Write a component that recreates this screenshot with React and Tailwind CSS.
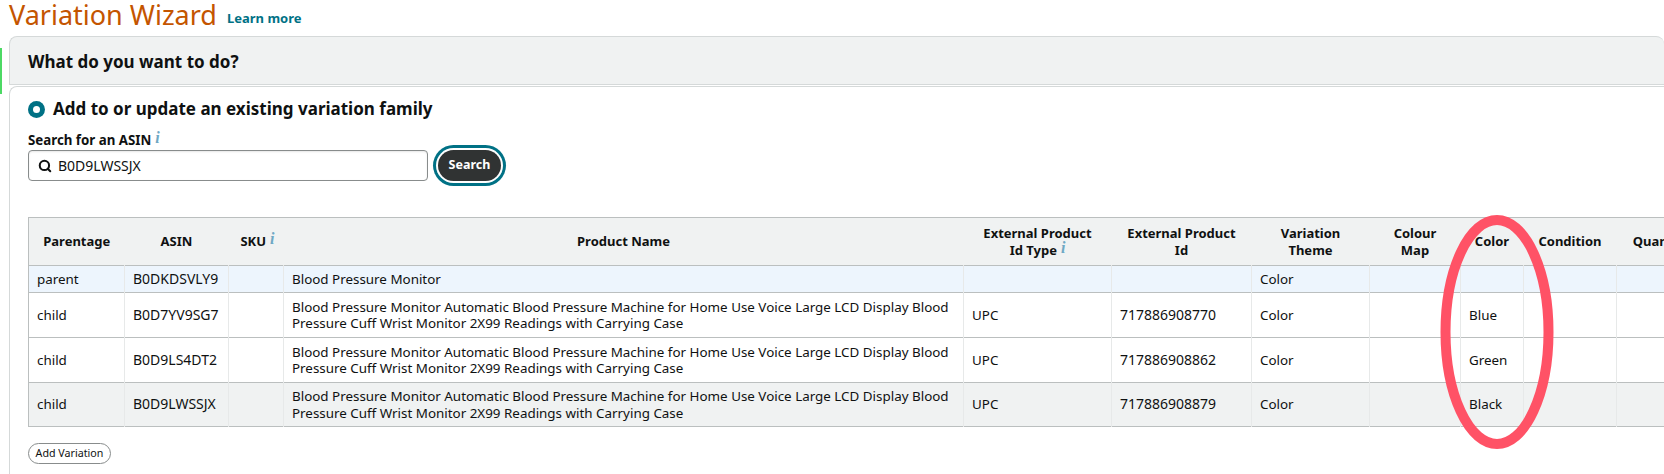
import React from 'react';
import { Search } from 'lucide-react';

const PRODUCT_NAME =
  'Blood Pressure Monitor Automatic Blood Pressure Machine for Home Use Voice Large LCD Display Blood Pressure Cuff Wrist Monitor 2X99 Readings with Carrying Case';

const rows = [
  { parentage: 'parent', asin: 'B0DKDSVLY9', name: 'Blood Pressure Monitor', type: '', ext: '', color: '', bg: 'bg-[#edf5fd]', height: 'h-[27px]' },
  { parentage: 'child', asin: 'B0D7YV9SG7', name: PRODUCT_NAME, type: 'UPC', ext: '717886908770', color: 'Blue', bg: 'bg-white', height: 'h-[45px]' },
  { parentage: 'child', asin: 'B0D9LS4DT2', name: PRODUCT_NAME, type: 'UPC', ext: '717886908862', color: 'Green', bg: 'bg-white', height: 'h-[45px]' },
  { parentage: 'child', asin: 'B0D9LWSSJX', name: PRODUCT_NAME, type: 'UPC', ext: '717886908879', color: 'Black', bg: 'bg-[#f0f2f2]', height: 'h-[44px]' },
];

const InfoMark = () => (
  <i className="ml-1 font-['Liberation_Serif',serif] text-[16px] font-bold leading-none text-[#6fa8c4] relative -top-[2px]">i</i>
);

const Th = ({ children, className = '' }) => (
  <th className={`px-1 text-center align-middle text-[13px] font-bold leading-[17px] text-[#0f1111] ${className}`}>{children}</th>
);

const Td = ({ children, wide }) => (
  <td className={`border-r border-[#e7e9e9] pl-2 pr-1 align-middle leading-[16.5px] text-[#0f1111] ${wide ? 'text-[14px]' : 'text-[13.4px]'}`}>
    {children}
  </td>
);

const App = () => {
  return (
    <div className="relative h-[474px] w-[1664px] overflow-hidden bg-white font-['Noto_Sans',sans-serif] text-[#0f1111]">
      <div className="flex h-[36px] items-start pl-[9px]">
        <h1 className="text-[27px] font-normal leading-[30px] text-[#c45500]">Variation Wizard</h1>
        <a className="ml-[10px] mt-[9px] text-[13px] font-bold leading-[18px] text-[#007185]">Learn more</a>
      </div>

      {/* green sliver of the neighbouring page element */}
      <div className="absolute left-0 top-[48px] h-[46px] w-[2px] bg-[#4cd964]" />

      <div className="ml-[9px]">
        <div className="flex h-[49px] items-center rounded-t-lg border border-r-0 border-[#d5d9d9] bg-[#f0f2f2] pl-[18px] pt-[2px]">
          <h2 className="text-[17px] font-bold text-[#0f1111]">What do you want to do?</h2>
        </div>

        <div className="mt-[1px] h-[388px] rounded-tl-lg border-l border-t border-[#d5d9d9] pl-[18px]">
          <label className="mt-[11px] flex items-center">
            <span className="flex h-[17px] w-[17px] items-center justify-center rounded-full bg-[#007185]">
              <span className="h-[7px] w-[7px] rounded-full bg-white" />
            </span>
            <span className="ml-2 text-[17px] font-bold leading-[22px]">Add to or update an existing variation family</span>
          </label>

          <div className="mt-[11px] text-[13.3px] font-bold leading-[18px]">
            Search for an ASIN
            <InfoMark />
          </div>

          <div className="mt-[1px] flex items-center">
            <div className="flex h-[31px] w-[400px] items-center rounded border border-[#888c8c] pl-[9px] shadow-[inset_0_1px_2px_rgba(15,17,17,0.1)]">
              <Search size={14} strokeWidth={3.5} className="text-[#0f1111]" />
              <span className="ml-[6px] text-[14px] text-[#0f1111]">B0D9LWSSJX</span>
            </div>
            <button className="ml-[10px] flex h-[31px] w-[63px] items-center justify-center rounded-full bg-[#303333] text-[12.5px] font-bold text-white shadow-[0_0_0_2px_#fff,0_0_0_5px_#007185]">
              Search
            </button>
          </div>

          <div className="mt-[36px]">
            <table className="w-[1678px] table-fixed border-collapse border border-r-0 border-[#bbbfbf]">
              <colgroup>
                <col className="w-[96px]" />
                <col className="w-[104px]" />
                <col className="w-[55px]" />
                <col className="w-[680px]" />
                <col className="w-[148px]" />
                <col className="w-[140px]" />
                <col className="w-[118px]" />
                <col className="w-[91px]" />
                <col className="w-[63px]" />
                <col className="w-[93px]" />
                <col className="w-[90px]" />
              </colgroup>
              <thead>
                <tr className="h-[48px] border-b border-[#bbbfbf] bg-[#f0f2f2]">
                  <Th>Parentage</Th>
                  <Th>ASIN</Th>
                  <Th className="pl-[7px]">
                    SKU
                    <InfoMark />
                  </Th>
                  <Th>Product Name</Th>
                  <Th>
                    External Product
                    <br />
                    Id Type
                    <InfoMark />
                  </Th>
                  <Th>
                    External Product
                    <br />
                    Id
                  </Th>
                  <Th>
                    Variation
                    <br />
                    Theme
                  </Th>
                  <Th>
                    Colour
                    <br />
                    Map
                  </Th>
                  <Th>Color</Th>
                  <Th>Condition</Th>
                  <Th>Quantity</Th>
                </tr>
              </thead>
              <tbody>
                {rows.map((row) => (
                  <tr key={row.asin} className={`${row.height} ${row.bg} border-b border-[#bbbfbf]`}>
                    <Td>{row.parentage}</Td>
                    <Td wide>{row.asin}</Td>
                    <Td />
                    <Td>{row.name}</Td>
                    <Td>{row.type}</Td>
                    <Td wide>{row.ext}</Td>
                    <Td>Color</Td>
                    <Td />
                    <Td>{row.color}</Td>
                    <Td />
                    <Td />
                  </tr>
                ))}
              </tbody>
            </table>
          </div>

          <button className="mt-[16px] flex h-[21px] w-[83px] items-center justify-center rounded-full border border-[#888c8c] bg-white text-[10.7px] text-[#0f1111]">
            Add Variation
          </button>
        </div>
      </div>

      {/* red hand-drawn marker round the Color column */}
      <svg className="pointer-events-none absolute left-[1440px] top-[215px]" width="114" height="234" viewBox="0 0 114 234">
        <ellipse cx="57" cy="117" rx="51.5" ry="112" fill="none" stroke="#ff5266" strokeWidth="10" />
      </svg>
    </div>
  );
};

export default App;
